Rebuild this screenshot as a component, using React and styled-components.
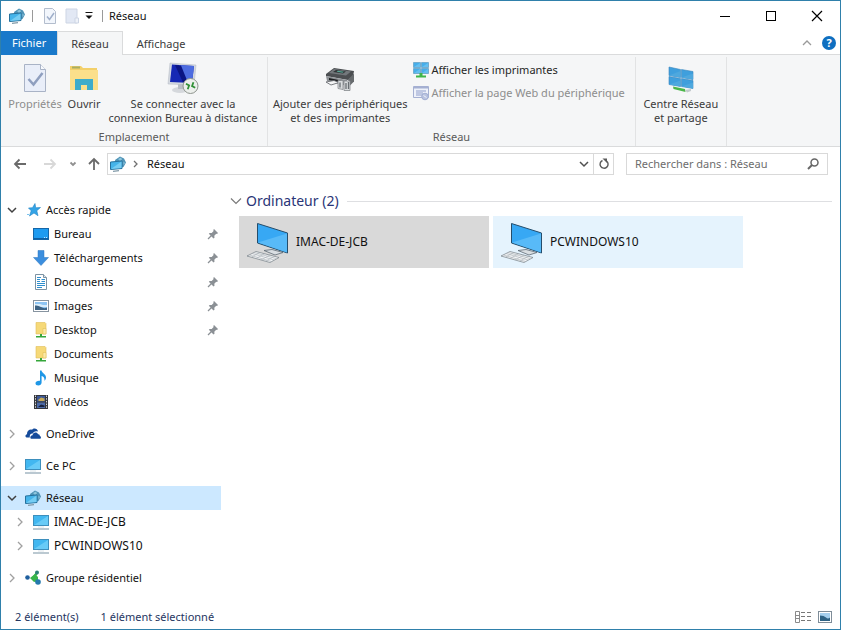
import React, { Component } from 'react';
import styled, { createGlobalStyle } from 'styled-components';

const quickAccess = [
  { name: 'Bureau', icon: 'desktop', pinned: true },
  { name: 'Téléchargements', icon: 'download', pinned: true },
  { name: 'Documents', icon: 'document', pinned: true },
  { name: 'Images', icon: 'picture', pinned: true },
  { name: 'Desktop', icon: 'netFolder', pinned: true },
  { name: 'Documents', icon: 'netFolder' },
  { name: 'Musique', icon: 'music' },
  { name: 'Vidéos', icon: 'video' },
];

const computers = ['IMAC-DE-JCB', 'PCWINDOWS10'];

const tree = [
  { name: 'Accès rapide', icon: 'star', open: true, children: quickAccess },
  { name: 'OneDrive', icon: 'cloud' },
  { name: 'Ce PC', icon: 'pc' },
  {
    name: 'Réseau',
    icon: 'network',
    open: true,
    children: computers.map(name => ({ name, icon: 'pc', computer: true })),
  },
  { name: 'Groupe résidentiel', icon: 'homegroup' },
];

const smallIcons = {
  desktop: (
    <>
      <rect x="0.5" y="2.5" width="15" height="11" fill="#1e9bf0" stroke="#1566a8" />
      <path d="M1 12.5h14" stroke="#0d5fa3" />
      <path d="M11 11.5h1M13 11.5h1" stroke="#bfe4ff" />
    </>
  ),
  download: <path d="M5 0.5h6v7h4.500L8 15.500 0.500 7.500H5z" fill="#3b8ede" stroke="#2c74bd" strokeWidth="0.5" />,
  document: (
    <>
      <path d="M2.500 0.500h8l3 3v12h-11z" fill="#fff" stroke="#7d93a3" />
      <path d="M10.500 0.500v3h3" fill="#dce6ee" stroke="#7d93a3" />
      <path d="M4 5.500h3M4 7.500h3M8.500 5.500h3.500M8.500 7.500h3.500M4 9.500h8M4 11.500h8M4 13.500h5" stroke="#2f8fce" />
      <path d="M4 3h4v1H4z" fill="#2f8fce" />
    </>
  ),
  picture: (
    <>
      <rect x="0.5" y="2.5" width="15" height="11" fill="#fff" stroke="#8794a0" />
      <rect x="2" y="4" width="12" height="8" fill="#8ec5f3" />
      <path d="M2 6h5l3 1h4v2H2z" fill="#d9edfb" />
      <path d="M2 7.500q3-0.500 6 1.500t6 0.500V12H2z" fill="#3d6384" />
    </>
  ),
  netFolder: (
    <>
      <path d="M3 0.500h9l1 1V12H3z" fill="#f6d978" stroke="#e0bd57" strokeWidth="0.600" />
      <path d="M10 6.500h3V12h-3z" fill="#fbe9a6" stroke="#dcb84f" strokeWidth="0.500" />
      <path d="M7 12h2v2h4v1.500H3V14h4z" fill="#35a63a" />
    </>
  ),
  music: (
    <path
      d="M7 0.500h1.500c0.500 3 4.500 3.500 4.500 7 0 1.500-0.800 2.600-1.600 3.200C12 8 10.500 6.500 8.600 6v6.500c0 1.700-1.600 3-3.300 3S2.500 14.500 2.500 13.200c0-1.600 2-2.900 4.500-2.500z"
      fill="#1f97e6"
    />
  ),
  video: (
    <>
      <rect x="1" y="1" width="14" height="14" fill="#34363c" />
      <path d="M2.500 1.500v13M13.500 1.500v13" stroke="#d5d7da" strokeDasharray="1.500 1.200" />
      <rect x="4" y="2" width="8" height="5.500" fill="#3d5894" />
      <rect x="4" y="8.500" width="8" height="5.500" fill="#4c6aa8" />
      <path d="M5 6l3-2.500 3.500 1v2.500H6z" fill="#c9a955" />
      <path d="M5 13l3-2.500 3.500 1V13z" fill="#17213d" />
    </>
  ),
  star: (
    <>
      <path d="M10 1.500l0.700 4.300 4.800-0.300-3.700 3.200 1.200 5-4-2.700-4.500 3 1.700-5.200-2.700-2.800 4-0.300z" fill="#34a4e6" stroke="#1f83c6" strokeWidth="0.600" />
      <path d="M2 12.500h2" stroke="#7cc4ee" />
    </>
  ),
  cloud: (
    <path
      d="M1.500 11.500C0 11 0 8.600 2 8.200 1.800 5 4.600 3 7 3.800 8.700 1.500 12.600 2.400 13 5.600c-2.300-1-4.700 0-5.300 2C5.800 7.300 4.400 9 4.800 11.500zM6 12.800c-1.300-0.800-0.700-3.400 1.500-3.500 0.200-3.200 4.500-4 5.600-1 1.300-0.200 1.800 1 1.700 1.600 1.700 0.400 1.500 2.900-0.200 2.900z"
      fill="#154b9b"
    />
  ),
  pc: (
    <>
      <rect x="0.5" y="1.500" width="15" height="10" fill="#42b7f0" stroke="#3d8fbd" />
      <path d="M1 11L15 2v9z" fill="#68cbf7" />
      <path d="M0 15h16" stroke="#8da4b3" strokeWidth="1.200" />
      <path d="M5 13h6" stroke="#dbe4ea" />
    </>
  ),
  network: (
    <>
      <path d="M10 0.500l4 2 2 4-2.500 4.500-4 1-4-3-0.500-5z" fill="#4f93b6" />
      <path d="M8 3l3-1.500 1 2-2 1.500zM13.500 5.500l1.500 1.500-1.500 2z" fill="#8fc6dd" />
      <path d="M0.500 6l11.500-1v7.500l-11.500 1z" fill="#45b4ea" stroke="#27719c" />
      <path d="M1 13L11.500 5.500v6.500z" fill="#76cdf3" />
      <path d="M3 15.300l6-0.600" stroke="#8099a8" strokeWidth="1.200" />
    </>
  ),
  homegroup: (
    <>
      <path d="M12 3L8 8l5 4" fill="none" stroke="#38b54a" strokeWidth="2.500" />
      <path d="M5 8l5-4 3 3v4l-4 1z" fill="#38b54a" />
      <circle cx="2.500" cy="7.500" r="2.300" fill="#1f5f9e" />
      <circle cx="12" cy="2.500" r="2" fill="#2a7f77" />
      <circle cx="13" cy="12" r="2.800" fill="#2479ad" />
    </>
  ),
  page: (
    <>
      <path d="M2.500 0.500h8l3 3v12h-11z" fill="#f2f6fc" stroke="#b3bdcd" />
      <path d="M5 8.500l2.500 3L12 5" fill="none" stroke="#9fafca" strokeWidth="1.500" />
    </>
  ),
  newFolder: (
    <>
      <path d="M2 1h11v14H2z" fill="#e2e8f4" stroke="#cdd5e4" />
      <path d="M11 10h3.500v5H11z" fill="#eef2f9" stroke="#cdd5e4" />
    </>
  ),
  printers: (
    <>
      <path d="M0.500 0.500h7v5h-7zM8.500 0.500h7v5h-7zM0.500 6.500h7v5h-7zM8.500 6.500h7v5h-7z" fill="#46aeea" stroke="#6aa3c6" strokeWidth="0.800" />
      <path d="M1 5L7 1v4zM9 5l6-4v4zM1 11l6-4v4zM9 11l6-4v4z" fill="#64bff0" />
      <path d="M6.500 11h3v2.500h3.500v2H3v-2h3.500z" fill="#3fb549" />
    </>
  ),
  webPage: (
    <>
      <path d="M0.500 1.500h15v11H0.500z" fill="#eef1fa" stroke="#a5b0d2" />
      <path d="M1 2.500h14" stroke="#a5b0d2" strokeWidth="2" />
      <path d="M3 6h10M3 8h7M3 10h6" stroke="#8f9ecb" />
      <circle cx="12" cy="11.500" r="3.300" fill="#b9c3e0" stroke="#a3afd3" />
      <path d="M10.500 10.500l3 2" stroke="#eef1fa" />
    </>
  ),
};

const Icon = ({ name }) => (
  <SmallSvg viewBox="0 0 16 16" aria-hidden="true">{smallIcons[name]}</SmallSvg>
);

const Chevron = ({ open }) => (
  <ChevronSvg viewBox="0 0 10 10" aria-hidden="true">
    {open
      ? <path d="M1 3l4 4 4-4" fill="none" stroke="#404040" strokeWidth="1.500" />
      : <path d="M3 1l4 4-4 4" fill="none" stroke="#a0a0a0" strokeWidth="1.300" />}
  </ChevronSvg>
);

const Pin = () => (
  <PinSvg viewBox="0 0 12 12" aria-hidden="true">
    <path d="M7 1l4 4-1 1-0.800-0.200-1.900 1.900 0.200 2-1 0.800L1.800 5.800l0.900-0.900 2 0.100 1.900-1.900L6.300 2z" fill="#8b9095" />
    <path d="M4.500 7.500L1 11" stroke="#8b9095" strokeWidth="1.300" />
  </PinSvg>
);

const PropertiesIcon = () => (
  <BigSvg viewBox="0 0 32 32" aria-hidden="true">
    <path d="M5.500 2.500h16l5 5v22h-21z" fill="#e9eef9" stroke="#a9b3c6" />
    <path d="M21.500 2.500v5h5" fill="#f8fafd" stroke="#a9b3c6" />
    <path d="M9.500 17l5 5.500L23.500 11" fill="none" stroke="#8f9fbf" strokeWidth="2.500" />
  </BigSvg>
);

const OpenIcon = () => (
  <BigSvg viewBox="0 0 32 32" aria-hidden="true">
    <path d="M2 4h11l2 2h14v21H2z" fill="#f3d06a" />
    <path d="M4 4.500h8v2H4z" fill="#a9ae62" />
    <path d="M2 8h28v20H2z" fill="#fbdf8b" />
    <path d="M7 28V17h18v11h-6v-5h-6v5z" fill="#3eaccb" />
  </BigSvg>
);

const RemoteIcon = () => (
  <BigSvg viewBox="0 0 32 32" aria-hidden="true">
    <ellipse cx="13" cy="28" rx="8" ry="3" fill="#d5d8dc" />
    <path d="M11 21h7v6h-7z" fill="#b9bec5" />
    <path d="M3 1l26 2-2 20-26-1z" fill="#d4d9e1" stroke="#b0b6c0" strokeWidth="0.500" />
    <path d="M5 2.500l22 1.500-2 17-22-1z" fill="#1628b4" />
    <path d="M12 3l15 1-2 17-6-0.300z" fill="#4d6ce0" />
    <path d="M8 3l6 0.400 7 17.400-5-0.200z" fill="#0b1583" />
    <circle cx="23.500" cy="24" r="7.500" fill="#ecefec" stroke="#8e948e" />
    <path d="M18.500 23.500l3.500 0.500v4M28.500 24l-3.500-0.500V19.500" fill="none" stroke="#2f8f35" strokeWidth="1.800" transform="rotate(20 23.500 24)" />
  </BigSvg>
);

const PrinterIcon = () => (
  <BigSvg viewBox="0 0 32 32" aria-hidden="true">
    <path d="M2 12l8-6 20 3-1 5-5 4-22-4z" fill="#4b4e51" />
    <path d="M10 7l17 2.500-5 4L5 11z" fill="#73787c" />
    <path d="M12 8l10 1.500-3 2-10-1.500z" fill="#2f3335" />
    <path d="M14 8.800l6 1-1.500 1-6-1z" fill="#57a696" />
    <path d="M2 14l21 4v6L3 19z" fill="#8d9195" />
    <path d="M24 17.500l6-6v8l-4 4z" fill="#676b6e" />
    <path d="M5 16l12 2.500v2L5 18z" fill="#1e2022" />
    <path d="M2 20l8-1.500 5 2L7 23z" fill="#f4f5f6" stroke="#5c6064" strokeWidth="0.800" />
    <path d="M14 18.500h5v9l-5-1zM20 19h6v9.500h-6z" fill="#d9dcde" stroke="#85898d" strokeWidth="0.800" />
    <path d="M16 20.500v5M22 21v6M24.500 20v7" stroke="#686d72" strokeWidth="1.300" />
  </BigSvg>
);

const SharingIcon = () => (
  <BigSvg viewBox="0 0 32 32" aria-hidden="true">
    <path d="M4 5l11.500 2.500v8L4 13.500zM16.500 7.500l11.500 2v8l-11.500-2zM4 14.500l11.500 2v8L4 22.500zM16.500 16.500l11.500 2v8l-11.500-2z" fill="#3f9fdd" stroke="#3884bc" strokeWidth="0.600" />
    <path d="M4 13.500L15.500 9v6.500zM16.500 15.500L28 11.500v6zM4 22.500l11.500-4v6zM16.500 24.500L28 20.500v6z" fill="#4ea8de" />
    <path d="M8 24.500l12 2.500 0.500 3-12-3z" fill="#4bb649" />
    <path d="M20 28l6-1v2l-4 1.500z" fill="#c3cacd" />
  </BigSvg>
);

const ComputerIcon = () => (
  <TileSvg viewBox="0 0 42 42" aria-hidden="true">
    <path d="M10.500 2.500L40.500 12v20L10.500 22z" fill="#37a8f4" stroke="#254d6b" />
    <path d="M11 21.500L40 12.500v19z" fill="#58baf8" />
    <path d="M17 29.500l8-1 11 3-8 2.500z" fill="#d9dee2" stroke="#5e6a73" strokeWidth="0.800" />
    <path d="M0 35l9-4.500L32 36.500l-9 5z" fill="#f3f5f6" stroke="#737d84" strokeWidth="0.700" />
    <path d="M2.500 34l22 6.500M5 32.500l22 6.500M7 31.500l22 6M4.500 36l8.500-4.500M9 37.500l9-5M14 39l9-5M18 40.500l9-5" stroke="#a8afb5" strokeWidth="0.600" />
  </TileSvg>
);

const NavIcon = ({ d, color }) => (
  <SmallSvg viewBox="0 0 16 16" aria-hidden="true">
    <path d={d} fill="none" stroke={color} strokeWidth="1.800" />
  </SmallSvg>
);

class App extends Component {
  constructor(props) {
    super(props);

    this.state = {
      selectedNode: 'Réseau',
      selectedTile: 'IMAC-DE-JCB',
      search: '',
    }
  }

  selectNode = (name) => {
    this.setState({ selectedNode: name });
  }

  selectTile = (name) => {
    this.setState({ selectedTile: name });
  }

  handleSearch = (e) => {
    this.setState({ search: e.target.value });
  }

  titleBar = () => {
    return (
      <TitleBar>
        <Icon name="network" />
        <TitleSeparator />
        <QuickButton aria-label="Propriétés"><Icon name="page" /></QuickButton>
        <QuickButton aria-label="Nouveau dossier"><Icon name="newFolder" /></QuickButton>
        <CustomizeButton aria-label="Personnaliser">
          <svg width="8" height="8" viewBox="0 0 8 8"><path d="M0.500 0.500h7" stroke="#111" /><path d="M0.500 3.500h7L4 7z" fill="#111" /></svg>
        </CustomizeButton>
        <TitleSeparator />
        <Title>Réseau</Title>
        <WindowButtons>
          <WindowButton aria-label="Réduire">
            <svg width="12" height="12"><path d="M1 6.500h10" stroke="#000" /></svg>
          </WindowButton>
          <WindowButton aria-label="Agrandir">
            <svg width="12" height="12"><rect x="1.500" y="1.500" width="9" height="9" fill="none" stroke="#000" /></svg>
          </WindowButton>
          <WindowButton aria-label="Fermer">
            <svg width="12" height="12"><path d="M1 1l10 10M11 1L1 11" stroke="#000" strokeWidth="1.200" /></svg>
          </WindowButton>
        </WindowButtons>
      </TitleBar>
    )
  }

  tabs = () => {
    return (
      <TabBar>
        <FileTab>Fichier</FileTab>
        <Tab $active>Réseau</Tab>
        <Tab>Affichage</Tab>
        <TabTools>
          <PlainButton aria-label="Réduire le ruban">
            <svg width="10" height="10"><path d="M1 7l4-4 4 4" fill="none" stroke="#9a9a9a" strokeWidth="1.300" /></svg>
          </PlainButton>
          <HelpButton aria-label="Aide">?</HelpButton>
        </TabTools>
      </TabBar>
    )
  }

  ribbon = () => {
    return (
      <Ribbon>
        <Group>
          <GroupTools>
            <BigButton $width={58} disabled><PropertiesIcon />Propriétés</BigButton>
            <BigButton $width={40}><OpenIcon />Ouvrir</BigButton>
            <BigButton $width={158}>
              <RemoteIcon />
              <span>Se connecter avec la</span>
              <span>connexion Bureau à distance</span>
            </BigButton>
          </GroupTools>
          <GroupName>Emplacement</GroupName>
        </Group>
        <Group>
          <GroupTools>
            <BigButton $width={134}>
              <PrinterIcon />
              <span>Ajouter des périphériques</span>
              <span>et des imprimantes</span>
            </BigButton>
            <SmallButtons>
              <SmallButton><Icon name="printers" />Afficher les imprimantes</SmallButton>
              <SmallButton disabled><Icon name="webPage" />Afficher la page Web du périphérique</SmallButton>
            </SmallButtons>
          </GroupTools>
          <GroupName>Réseau</GroupName>
        </Group>
        <Group>
          <GroupTools>
            <BigButton $width={80}>
              <SharingIcon />
              <span>Centre Réseau</span>
              <span>et partage</span>
            </BigButton>
          </GroupTools>
        </Group>
      </Ribbon>
    )
  }

  addressBar = () => {
    return (
      <AddressBar>
        <NavButtons>
          <NavButton $width={30} aria-label="Précédent"><NavIcon d="M14 8H3M7.500 3.500L3 8l4.500 4.500" color="#6a6a6a" /></NavButton>
          <NavButton $width={30} aria-label="Suivant" disabled><NavIcon d="M2 8h11M8.500 3.500L13 8l-4.500 4.500" color="#d8d8d8" /></NavButton>
          <NavButton $width={16} aria-label="Emplacements récents"><NavIcon d="M5.500 6.500l2.500 2.500 2.500-2.500" color="#909090" /></NavButton>
          <NavButton $width={26} aria-label="Dossier parent"><NavIcon d="M8 14V3M3 8l5-5 5 5" color="#6a6a6a" /></NavButton>
        </NavButtons>
        <PathBox>
          <Icon name="network" />
          <PathArrow viewBox="0 0 10 10"><path d="M3 2l3 3-3 3" fill="none" stroke="#707070" strokeWidth="1.300" /></PathArrow>
          <PathText href="#reseau">Réseau</PathText>
          <PathButton aria-label="Historique">
            <svg width="10" height="10"><path d="M1 3l4 4 4-4" fill="none" stroke="#505050" strokeWidth="1.500" /></svg>
          </PathButton>
          <PathButton $divided aria-label="Actualiser">
            <svg width="12" height="12">
              <path d="M8.500 3A4 4 0 1 1 4.500 2.500" fill="none" stroke="#5a5a5a" strokeWidth="1.400" />
              <path d="M4.500 0.500h4.500V5z" fill="#5a5a5a" />
            </svg>
          </PathButton>
        </PathBox>
        <SearchBox>
          <SearchInput
            type="search"
            aria-label="Rechercher"
            placeholder="Rechercher dans : Réseau"
            value={this.state.search}
            onChange={this.handleSearch}
          />
          <svg width="12" height="12">
            <circle cx="7.500" cy="4.500" r="3.500" fill="none" stroke="#666" strokeWidth="1.500" />
            <path d="M5 7l-4 4" stroke="#666" strokeWidth="2" />
          </svg>
        </SearchBox>
      </AddressBar>
    )
  }

  sidebar = () => {
    const { selectedNode } = this.state;

    return (
      <Sidebar aria-label="Volet de navigation">
        {tree.map(node => (
          <Branch key={node.name}>
            <Row $selected={selectedNode === node.name} onClick={() => this.selectNode(node.name)}>
              <Chevron open={node.open} />
              <Icon name={node.icon} />
              <RowName>{node.name}</RowName>
            </Row>
            {node.children && node.children.map((child, i) => (
              <Row key={i} $child>
                {child.computer ? <Chevron /> : <ChevronSpace />}
                <Icon name={child.icon} />
                <RowName $computer={child.computer}>{child.name}</RowName>
                {child.pinned && <Pin />}
              </Row>
            ))}
          </Branch>
        ))}
      </Sidebar>
    )
  }

  content = () => {
    return (
      <Content>
        <SectionHeader>
          <svg width="12" height="12"><path d="M1 3.500l5 5 5-5" fill="none" stroke="#7a7a7a" strokeWidth="1.200" /></svg>
          <SectionTitle>Ordinateur (2)</SectionTitle>
          <SectionLine />
        </SectionHeader>
        <Tiles>
          {computers.map(name => (
            <Tile key={name} $selected={this.state.selectedTile === name} onClick={() => this.selectTile(name)}>
              <ComputerIcon />
              {name}
            </Tile>
          ))}
        </Tiles>
      </Content>
    )
  }

  statusBar = () => {
    return (
      <StatusBar>
        <span>2 élément(s)</span>
        <span>1 élément sélectionné</span>
        <ViewButtons>
          <PlainButton aria-label="Détails">
            <svg width="16" height="12">
              <path d="M0.500 0.500h4v11h-4zM0.500 4.500h4M0.500 7.500h4" fill="none" stroke="#8a8a8a" />
              <path d="M6 1.500h10M6 5.500h10M6 9.500h10" stroke="#777" strokeDasharray="4 2" />
            </svg>
          </PlainButton>
          <PlainButton aria-label="Grandes icônes">
            <svg width="14" height="12">
              <rect x="0.500" y="0.500" width="13" height="11" fill="#fff" stroke="#7f8d99" />
              <rect x="2" y="2" width="10" height="8" fill="#a5cfee" />
              <path d="M2 4.500q4 0 6 2t4 0V10H2z" fill="#2e6284" />
            </svg>
          </PlainButton>
        </ViewButtons>
      </StatusBar>
    )
  }

  render() {
    return (
      <Window>
        <GlobalStyle />
        {this.titleBar()}
        {this.tabs()}
        {this.ribbon()}
        {this.addressBar()}
        <Body>
          {this.sidebar()}
          {this.content()}
        </Body>
        {this.statusBar()}
      </Window>
    );
  }
}

const GlobalStyle = createGlobalStyle`
  * {
    box-sizing: border-box;
  }

  body {
    margin: 0;
    background-color: white;
    color: #111111;
    font-family: "Segoe UI", "Noto Sans", sans-serif;
    font-size: 11px;
    line-height: 16px;
  }

  button, input {
    margin: 0;
    padding: 0;
    border: none;
    background: none;
    color: inherit;
    font: inherit;
  }

  svg {
    flex-shrink: 0;
  }
`

const SmallSvg = styled.svg`
  width: 16px;
  height: 16px;
`

const BigSvg = styled.svg`
  width: 32px;
  height: 32px;
  margin-bottom: 3px;
`

const TileSvg = styled.svg`
  width: 42px;
  height: 42px;
`

const ChevronSvg = styled.svg`
  width: 10px;
  height: 10px;
  margin-right: 8px;
`

const ChevronSpace = styled.span`
  width: 18px;
  flex-shrink: 0;
`

const PinSvg = styled.svg`
  width: 12px;
  height: 12px;
`

const Window = styled.div`
  min-height: 100vh;
  border: 1px solid #2f80ab;
  display: flex;
  flex-direction: column;
`

const PlainButton = styled.button`
  display: flex;
  align-items: center;
  justify-content: center;
`

const TitleBar = styled.header`
  height: 30px;
  padding-left: 8px;
  display: flex;
  align-items: center;
`

const TitleSeparator = styled.span`
  width: 1px;
  height: 12px;
  margin: 0 6px 0 7px;
  background-color: #9a9a9a;
`

const QuickButton = styled(PlainButton)`
  width: 22px;
  height: 22px;
`

const CustomizeButton = styled(PlainButton)`
  width: 12px;
  height: 22px;
`

const Title = styled.h1`
  margin: 0;
  font-size: 11px;
  font-weight: normal;
`

const WindowButtons = styled.div`
  margin-left: auto;
  display: flex;
`

const WindowButton = styled(PlainButton)`
  width: 46px;
  height: 30px;
`

const TabBar = styled.div`
  height: 24px;
  display: flex;
  border-bottom: 1px solid #dadbdc;
`

const Tab = styled.button`
  height: 24px;
  padding: 0 13px;
  color: #3b3b3b;
  border: 1px solid ${props => props.$active ? "#dadbdc" : "transparent"};
  border-bottom: none;
  background-color: ${props => props.$active ? "#f5f6f7" : "transparent"};
`

const FileTab = styled(Tab)`
  padding: 0 11px;
  border: none;
  color: white;
  background-color: #1979ca;
`

const TabTools = styled.div`
  margin-left: auto;
  padding-right: 4px;
  display: flex;
  align-items: center;
  gap: 10px;
`

const HelpButton = styled(PlainButton)`
  width: 14px;
  height: 14px;
  border-radius: 50%;
  background-color: #0f6fc0;
  color: white;
  font-weight: bold;
`

const Ribbon = styled.div`
  height: 92px;
  display: flex;
  background-color: #f5f6f7;
  border-bottom: 1px solid #dadbdc;
`

const Group = styled.section`
  margin: 2px 0 0;
  padding: 5px 5px 1px;
  display: flex;
  flex-direction: column;
  border-right: 1px solid #e2e3e4;
`

const GroupTools = styled.div`
  flex: 1;
  display: flex;
  align-items: flex-start;
`

const GroupName = styled.div`
  color: #5a5a5a;
  text-align: center;
`

const BigButton = styled.button`
  min-width: ${props => props.$width}px;
  display: flex;
  flex-direction: column;
  align-items: center;
  line-height: 14px;
  white-space: nowrap;
  color: ${props => props.disabled ? "#8d8d8d" : "#3b3b3b"};
`

const SmallButtons = styled.div`
  padding: 0 5px;
  display: flex;
  flex-direction: column;
  gap: 7px;
`

const SmallButton = styled.button`
  display: flex;
  align-items: center;
  gap: 3px;
  white-space: nowrap;
  color: ${props => props.disabled ? "#8d8d8d" : "#262626"};
`

const AddressBar = styled.div`
  padding: 6px 12px 6px 4px;
  display: flex;
  align-items: center;
`

const NavButtons = styled.div`
  display: flex;
`

const NavButton = styled(PlainButton)`
  width: ${props => props.$width}px;
  height: 22px;
`

const PathBox = styled.div`
  flex: 1;
  height: 22px;
  padding-left: 2px;
  display: flex;
  align-items: center;
  border: 1px solid #d9d9d9;
`

const PathArrow = styled.svg`
  width: 10px;
  height: 10px;
  margin: 0 6px 0 5px;
`

const PathText = styled.a`
  flex: 1;
  color: #111111;
  text-decoration: none;
`

const PathButton = styled(PlainButton)`
  width: 20px;
  height: 20px;
  border-left: 1px solid ${props => props.$divided ? "#d9d9d9" : "transparent"};
`

const SearchBox = styled.label`
  width: 202px;
  height: 22px;
  margin-left: 12px;
  padding: 0 8px;
  display: flex;
  align-items: center;
  border: 1px solid #d9d9d9;
`

const SearchInput = styled.input`
  flex: 1;
  min-width: 0;
  outline: none;

  &::placeholder {
    color: #6d6d6d;
    opacity: 1;
  }
`

const Body = styled.div`
  flex: 1;
  display: flex;
`

const Sidebar = styled.nav`
  width: 220px;
  padding-top: 17px;
  display: flex;
  flex-direction: column;
  gap: 8px;
`

const Branch = styled.div`
  display: flex;
  flex-direction: column;
`

const Row = styled.button`
  height: 24px;
  padding: 0 2px 0 ${props => props.$child ? 14 : 6}px;
  display: flex;
  align-items: center;
  text-align: left;
  background-color: ${props => props.$selected ? "#cce8ff" : "transparent"};
`

const RowName = styled.span`
  flex: 1;
  padding-left: 5px;
  font-size: ${props => props.$computer ? 12 : 11}px;
`

const Content = styled.main`
  flex: 1;
  padding: 10px 8px 0 9px;
`

const SectionHeader = styled.div`
  display: flex;
  align-items: center;
`

const SectionTitle = styled.h2`
  margin: 0 8px 0 4px;
  color: #2a3577;
  font-size: 14px;
  font-weight: normal;
  line-height: 20px;
`

const SectionLine = styled.span`
  flex: 1;
  height: 1px;
  background-color: #dedfe2;
`

const Tiles = styled.div`
  padding: 5px 0 0 9px;
  display: flex;
  flex-wrap: wrap;
  gap: 4px;
`

const Tile = styled.button`
  width: 250px;
  height: 52px;
  padding: 0 8px;
  display: flex;
  align-items: center;
  gap: 7px;
  font-size: 12px;
  background-color: ${props => props.$selected ? "#d9d9d9" : "#e5f3fd"};
`

const StatusBar = styled.footer`
  height: 24px;
  padding: 0 8px 0 14px;
  display: flex;
  align-items: center;
  gap: 22px;
  color: #26365f;
`

const ViewButtons = styled.div`
  margin-left: auto;
  display: flex;
  gap: 7px;
`

export default App;
